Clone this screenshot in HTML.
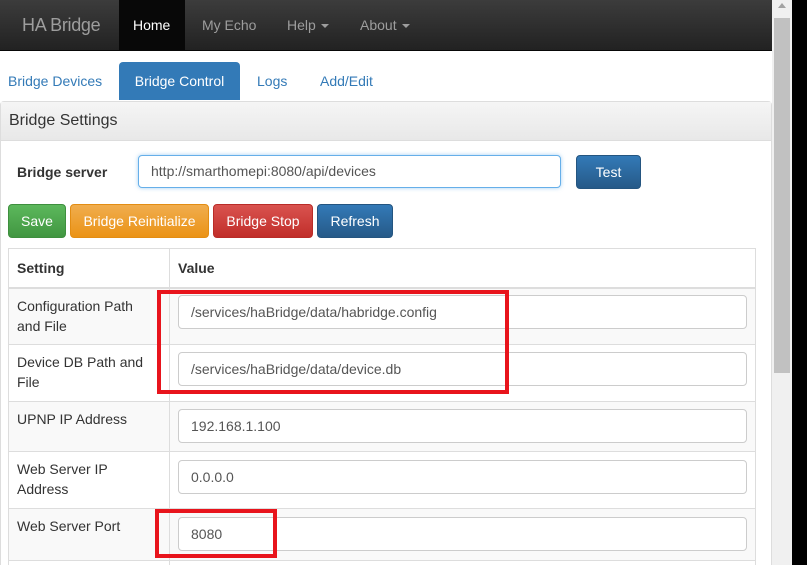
<!DOCTYPE html>
<html><head><style>
*{box-sizing:border-box;margin:0;padding:0}
html,body{width:807px;height:565px;overflow:hidden}
body{background:#fff;font-family:"Liberation Sans",sans-serif;font-size:14px;color:#333;position:relative}
.nav{position:absolute;left:0;top:0;width:772px;height:51px;background:linear-gradient(#3c3c3c,#222);border-bottom:1px solid #080808}
.nav span{position:absolute;top:17px;color:#9d9d9d;font-size:14px}
.brand{font-size:18px!important;top:15px!important;letter-spacing:-0.3px}
.home{position:absolute;left:119px;top:0;width:66px;height:51px;background:#080808}
.car{display:inline-block;border-top:4px solid #9d9d9d;border-left:4px solid transparent;border-right:4px solid transparent;vertical-align:middle;margin-left:5px}
.tab{position:absolute;top:62px;height:38px;line-height:38px;color:#337ab7;font-size:14px}
.panel{position:absolute;left:0;top:101px;width:772px;height:470px;border:1px solid #ddd;border-radius:4px}
.ph{height:39px;background:linear-gradient(#f5f5f5,#e8e8e8);border-bottom:1px solid #ddd;font-size:16px;padding:10px 8px}
.inp{position:absolute;border:1px solid #ccc;border-radius:4px;background:#fff;padding-left:12px;font-size:14px;color:#555}
.btn{position:absolute;top:204px;height:34px;line-height:32px;color:#fff;text-align:center;border-radius:4px;font-size:14px}
table{position:absolute;left:8px;top:248px;width:748px;border-collapse:collapse}
td{border:1px solid #ddd;vertical-align:top;padding:7px 8px;line-height:20px}
.red{position:absolute;border:4px solid #e8141c}
</style></head><body>
<div class="nav">
<span class="brand" style="left:22px">HA Bridge</span>
<div class="home"></div>
<span style="left:133px;color:#fff">Home</span>
<span style="left:202px">My Echo</span>
<span style="left:287px">Help<i class="car"></i></span>
<span style="left:360px">About<i class="car"></i></span>
</div>
<div class="tab" style="left:8px">Bridge Devices</div>
<div class="tab" style="left:119px;width:121px;background:#337ab7;color:#fff;text-align:center;border-radius:4px 4px 0 0">Bridge Control</div>
<div class="tab" style="left:257px">Logs</div>
<div class="tab" style="left:320px">Add/Edit</div>
<div class="panel"><div class="ph">Bridge Settings</div></div>
<div style="position:absolute;left:17px;top:164px;font-weight:bold">Bridge server</div>
<div class="inp" style="left:138px;top:155px;width:423px;height:33px;line-height:31px;border-color:#66afe9;box-shadow:0 0 4px rgba(102,175,233,.6)">http://smarthomepi:8080/api/devices</div>
<div class="btn" style="left:576px;top:155px;width:65px;background:linear-gradient(#337ab7,#265a88);border:1px solid #245580">Test</div>
<div class="btn" style="left:8px;width:58px;background:linear-gradient(#5cb85c,#419641);border:1px solid #3e8f3e">Save</div>
<div class="btn" style="left:70px;width:139px;background:linear-gradient(#f0ad4e,#eb9316);border:1px solid #e38d13">Bridge Reinitialize</div>
<div class="btn" style="left:213px;width:100px;background:linear-gradient(#d9534f,#c12e2a);border:1px solid #b92c28">Bridge Stop</div>
<div class="btn" style="left:317px;width:76px;background:linear-gradient(#337ab7,#265a88);border:1px solid #245580">Refresh</div>
<table>
<tr style="height:39px"><td style="width:161px;font-weight:bold;border-bottom:2px solid #ddd;padding-top:9px">Setting</td><td style="font-weight:bold;border-bottom:2px solid #ddd;padding-top:9px">Value</td></tr>
<tr style="height:57px;background:#f9f9f9"><td style="padding-right:20px">Configuration Path and File</td><td></td></tr>
<tr style="height:57px"><td>Device DB Path and File</td><td></td></tr>
<tr style="height:50px;background:#f9f9f9"><td>UPNP IP Address</td><td></td></tr>
<tr style="height:57px"><td>Web Server IP Address</td><td></td></tr>
<tr style="height:52px;background:#f9f9f9"><td>Web Server Port</td><td></td></tr>
<tr style="height:20px"><td></td><td></td></tr>
</table>
<div class="inp" style="left:178px;top:295px;width:569px;height:34px;line-height:32px">/services/haBridge/data/habridge.config</div>
<div class="inp" style="left:178px;top:352px;width:569px;height:34px;line-height:32px">/services/haBridge/data/device.db</div>
<div class="inp" style="left:178px;top:409px;width:569px;height:34px;line-height:32px">192.168.1.100</div>
<div class="inp" style="left:178px;top:460px;width:569px;height:34px;line-height:32px">0.0.0.0</div>
<div class="inp" style="left:178px;top:517px;width:569px;height:34px;line-height:32px">8080</div>
<div class="red" style="left:157px;top:290px;width:352px;height:104px"></div>
<div style="position:absolute;left:155px;top:509px;width:122px;height:49px;border:4px solid #e8141c"></div>
<div style="position:absolute;left:772px;top:0;width:20px;height:565px;background:#f0f0f0"></div>
<div style="position:absolute;left:778px;top:3px;width:0;height:0;border-left:4px solid transparent;border-right:4px solid transparent;border-bottom:5px solid #a3a3a3"></div>
<div style="position:absolute;left:774px;top:18px;width:16px;height:355px;background:#c1c1c1"></div>
<div style="position:absolute;left:792px;top:0;width:15px;height:565px;background:#000"></div>
</body></html>
